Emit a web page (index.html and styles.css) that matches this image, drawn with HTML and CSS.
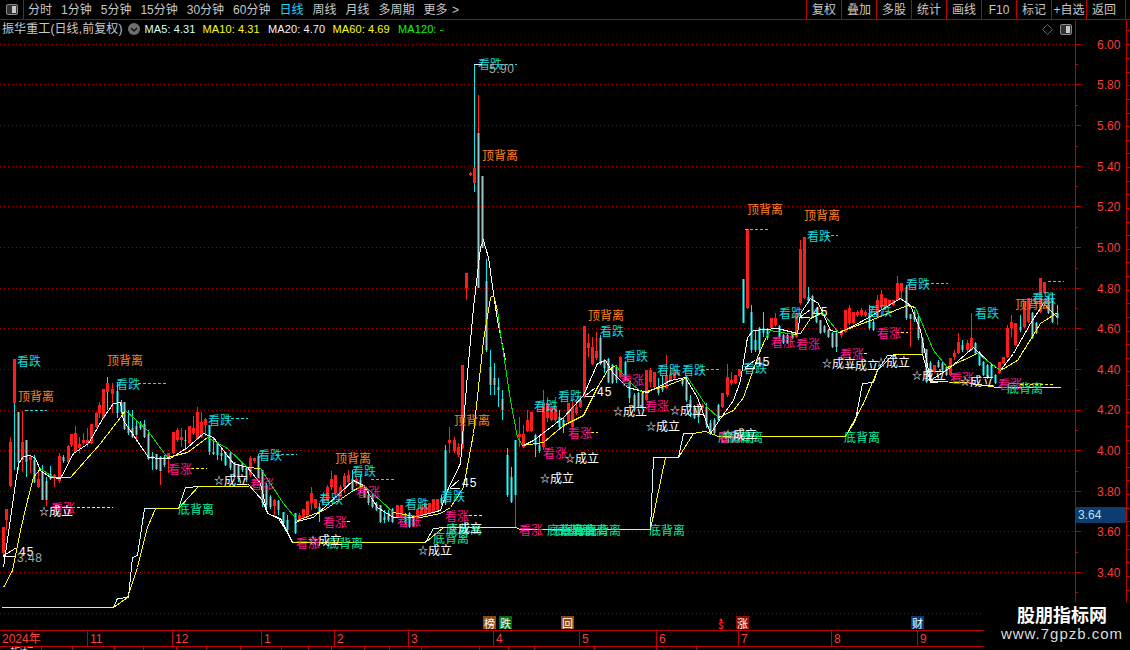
FILE: index.html
```html
<!DOCTYPE html>
<html lang="zh-CN">
<head>
<meta charset="utf-8">
<title>振华重工 日线</title>
<link rel="stylesheet" href="styles.css">
</head>
<body>
<div class="toolbar">
  <div class="toggle-cell"><span class="toggle-icon"><i></i></span></div>
  <nav class="periods">
    <span>分时</span><span>1分钟</span><span>5分钟</span><span>15分钟</span><span>30分钟</span><span>60分钟</span>
    <span class="active">日线</span><span>周线</span><span>月线</span><span>多周期</span><span>更多 <b class="chev">&gt;</b></span>
  </nav>
  <div class="actions">
    <span>复权</span><span>叠加</span><span>多股</span><span>统计</span><span>画线</span><span>F10</span><span>标记</span><span>+自选</span><span>返回</span>
  </div>
</div>

<div class="workspace">
  <div class="plot">
    <div class="legend">
      <span class="stock">振华重工(日线,前复权)</span>
      <span class="caret"><svg width="12" height="12" viewBox="0 0 12 12"><circle cx="6" cy="6" r="6" fill="#6e6e6e"/><path d="M3 5l3 3 3-3" fill="none" stroke="#111" stroke-width="1.4"/></svg></span>
      <span class="ma5">MA5: 4.31</span>
      <span class="ma10">MA10: 4.31</span>
      <span class="ma20">MA20: 4.70</span>
      <span class="ma60">MA60: 4.69</span>
      <span class="ma120">MA120: -</span>
      <span class="legend-tools">
        <svg width="11" height="11" viewBox="0 0 11 11"><path d="M5.5.5l5 5-5 5-5-5z" fill="none" stroke="#666"/></svg>
        <span class="toggle-icon"><i></i></span>
      </span>
    </div>
    <svg class="chart" width="1075" height="592" viewBox="0 38 1075 592">
      <path class="grid" d="M0 44.5H1075M0 84.5H1075M0 125.5H1075M0 166.5H1075M0 206.5H1075M0 247.5H1075M0 288.5H1075M0 328.5H1075M0 369.5H1075M0 410.5H1075M0 450.5H1075M0 491.5H1075M0 531.5H1075M0 572.5H1075M0 613.5H1075"/>
      <defs>
        <path id="down-bodies" d="M18 412V462M26 440V462M34 460V482M42 472V500M46 481V500M50 474V479M63 457V461M117 391V413M121 403V412M124 402V429M128 427V433M132 428V437M136 426V435M140 423V428M144 424V437M148 434V459M152 456V459M156 454V469M160 457V471M164 457V465M185 440V441M209 425V452M213 452V454M217 442V455M221 453V456M225 452V465M230 453V468M234 462V477M238 464V479M242 463V470M246 468V480M258 456V478M262 470V503M266 485V505M270 497V507M278 501V510M283 512V523M287 520V530M295 513V533M319 507V512M352 479V490M360 480V488M364 487V497M368 495V503M372 495V507M376 504V510M380 505V522M384 517V520M388 513V520M392 509V522M405 515V523M409 513V527M413 517V526M441 498V503M445 450V503M478 133V288M482 176V248M486 281V350M490 367V385M494 378V385M498 387V390M502 399V410M507 455V495M511 477V502M515 440V495M535 435V445M539 445V451M559 417V427M563 420V427M600 338V364M604 360V368M608 359V382M612 365V383M616 367V380M625 362V380M629 382V398M634 395V410M638 393V407M642 393V408M658 387V393M662 385V390M682 379V384M686 377V400M690 400V408M694 407V418M698 407V417M706 407V425M710 423V433M714 420V433M718 405V420M743 279V323M751 312V350M755 340V350M759 328V350M763 328V333M767 330V338M779 326V337M783 335V343M787 335V343M792 333V338M808 297V301M812 296V317M816 317V322M820 320V333M824 326V332M828 330V337M832 333V347M836 333V347M869 313V328M873 322V330M906 287V318M910 314V319M914 312V320M918 317V338M922 338V353M926 349V382M930 363V380M938 362V367M942 363V370M946 367V375M962 345V350M975 343V353M979 352V365M983 362V375M987 365V378M991 365V378M995 375V383M1020 327V330M1032 313V338M1036 323V333M1048 297V313M1052 298V322M1057 313V318"/>
      </defs>
      <g class="candles">
        <path class="wick-up" d="M3 527V556M6 509V530M10 437V487M14 359V403M22 411V472M30 455V473M38 472V488M54 474V487M59 453V483M68 445V464M71 434V447M75 426V453M79 437V453M83 433V445M87 428V447M91 424V444M96 412V428M99 402V418M103 389V419M112 383V413M168 453V473M173 432V454M177 428V442M181 428V447M189 426V444M193 416V435M197 407V440M201 412V438M205 418V436M250 456V477M254 458V463M274 499V517M299 513V522M303 509V518M307 501V516M311 487V510M315 499V509M323 492V505M327 485V501M331 471V490M335 475V494M340 485V497M344 473V493M348 470V484M356 476V486M397 505V518M401 505V518M417 509V519M421 505V516M425 503V516M429 503V514M433 499V513M437 499V511M449 427V453M454 437V453M458 443V457M462 365V449M466 273V300M470 172V176M519 417V447M523 425V448M527 410V432M531 412V432M543 390V450M547 397V422M551 407V421M555 397V422M568 403V423M572 400V428M576 400V415M580 395V408M584 326V398M588 333V357M592 337V365M596 332V360M620 356V378M646 370V401M650 368V387M654 372V388M666 355V389M670 367V382M674 369V379M678 372V376M702 403V410M722 393V408M727 364V397M731 372V385M735 375V384M739 369V377M747 229V309M771 318V329M775 313V327M796 313V338M800 240V305M804 237V299M841 330V338M845 310V333M849 305V325M853 312V324M857 310V317M861 308V317M865 310V317M877 295V318M881 290V308M885 298V309M889 300V306M893 300V306M897 276V301M901 283V300M934 365V373M950 358V376M954 350V360M958 333V354M967 340V352M971 313V351M999 362V374M1003 357V364M1007 325V358M1011 315V337M1015 323V346M1024 302V328M1028 298V323M1040 278V313M1044 282V294M478 95V133M515 495V528M160 471V485M910 319V347M46 500V506M136 435V442M1057 318V325"/>
        <path class="wick-down" d="M14 403V470M18 412V470M26 440V477M34 455V483M42 465V500M46 477V500M50 466V480M63 455V463M107 377V410M117 382V418M121 400V414M124 402V430M128 410V435M132 410V438M136 420V435M140 421V430M144 420V438M148 430V460M152 452V470M156 454V470M160 456V471M164 455V467M185 430V450M209 425V455M213 437V455M217 442V460M221 447V461M225 452V466M230 452V470M234 462V478M238 464V482M242 463V472M246 467V482M258 454V478M262 470V507M266 483V510M270 495V509M278 500V515M283 512V527M287 515V533M295 513V534M319 503V522M352 470V492M360 475V493M364 485V498M368 490V505M372 493V508M376 502V511M380 505V523M384 510V523M388 510V522M392 508V523M405 513V524M409 512V528M413 515V527M441 495V505M445 445V505M474 65V192M486 259V352M490 350V395M494 363V395M498 378V407M502 390V420M507 448V497M511 467V503M535 434V457M539 437V453M559 410V428M563 417V433M600 335V365M604 359V373M608 358V383M612 364V384M616 365V383M625 361V381M629 380V403M634 393V412M638 392V408M642 393V409M658 378V395M662 375V392M682 378V386M686 375V402M690 395V417M694 405V419M698 407V423M706 403V428M710 420V435M714 418V434M718 404V421M751 305V353M755 330V352M759 327V353M763 312V337M767 328V340M779 325V338M783 334V344M787 334V344M792 332V339M808 287V303M812 295V318M816 310V323M820 320V334M824 325V333M828 329V338M832 332V348M836 332V352M869 305V330M873 320V331M906 285V320M914 310V322M918 316V340M922 337V354M926 349V383M930 361V382M938 360V368M942 362V371M946 366V376M962 340V352M975 342V354M979 351V366M983 361V376M987 364V379M991 364V379M995 374V384M1020 315V332M1032 312V339M1036 322V334M1048 296V314M1052 293V323M1057 305V318"/>
        <path class="body-up" d="M3 527V553M6 509V520M10 442V486M14 359V403M22 442V460M30 457V460M38 479V487M54 475V478M59 456V481M68 446V462M71 434V445M75 433V452M79 444V448M83 440V443M87 440V444M91 424V443M96 413V427M99 405V413M103 389V418M107 383V392M112 389V394M168 453V459M173 432V453M177 430V440M181 437V440M189 426V443M193 428V433M197 412V439M201 422V437M205 419V425M250 458V475M254 458V461M274 500V506M299 515V520M303 509V517M307 501V515M311 493V503M315 499V508M323 499V503M327 487V500M331 479V487M335 475V493M340 487V495M344 476V487M348 475V482M356 479V484M397 505V517M401 505V517M417 509V518M421 505V515M425 503V515M429 503V513M433 499V512M437 499V510M449 440V443M454 440V451M458 447V455M462 365V448M466 273V288M470 173V175M474 168V183M519 434V437M523 434V447M527 420V431M531 412V431M543 403V447M547 403V418M551 407V420M555 407V420M568 403V422M572 407V427M576 407V413M580 400V407M584 326V397M588 343V348M592 347V364M596 351V358M620 357V377M646 370V400M650 370V382M654 372V387M666 375V388M670 375V380M674 369V378M678 372V375M702 405V408M722 393V407M727 377V395M731 380V383M735 375V383M739 369V376M747 229V308M771 318V328M775 318V325M796 313V337M800 249V303M804 237V298M841 332V335M845 310V332M849 308V323M853 312V323M857 312V315M861 310V315M865 312V315M877 300V317M881 294V307M885 298V308M889 300V305M893 300V305M897 283V300M901 283V291M934 365V372M950 358V375M954 353V357M958 342V353M967 343V350M971 338V350M999 362V373M1003 357V363M1007 328V357M1011 322V328M1015 323V345M1024 302V327M1028 298V322M1040 278V312M1044 282V293"/>
        <use href="#down-bodies" class="body-down"/>
        <use href="#down-bodies" class="body-core"/>
      </g>
      <g class="curves">
        <polyline class="line-white" points="3,567 13,497 18,463 23,456 30,455 35,458 40,470 50,477 60,478 73,453 88,443 103,417 113,403 120,402 123,420 148,457 160,458 170,458 187,447 203,433 213,437 233,463 247,467 260,483 267,513 278,518 290,537 292,542"/>
        <polyline class="line-white" points="295,522 300,520 313,517 353,480 363,485 377,507 393,517 413,517 440,510 447,490 460,463 467,373 473,307 477,273 480,247 483,240 488,257 493,293 497,320 505,360"/>
        <polyline class="line-white" points="523,445 533,440 563,417 583,395 597,363 605,360 613,373 627,387 647,392 670,380 685,377 697,397 710,433 720,418 733,400 740,380 747,337 753,330 777,328 797,333 800,313 810,298 818,303 830,330 840,332 863,320 900,298 910,305 920,330 930,380 950,367 973,347 990,363 1000,370 1013,353 1030,323 1043,303 1057,317"/>
        <polyline class="line-yellow" points="3,587 12,570 20,530 27,500 33,477 40,468"/>
        <polyline class="line-green" points="40,468 53,477"/>
        <polyline class="line-yellow" points="53,477 70,477 100,443 120,417 125,410"/>
        <polyline class="line-green" points="125,410 147,430 167,457"/>
        <polyline class="line-yellow" points="167,457 187,452 207,437"/>
        <polyline class="line-green" points="207,437 227,448 247,467"/>
        <polyline class="line-yellow" points="247,467 260,468"/>
        <polyline class="line-green" points="260,468 283,503 297,520"/>
        <polyline class="line-yellow" points="297,520 323,510 353,490 363,485"/>
        <polyline class="line-green" points="363,485 380,500 393,512"/>
        <polyline class="line-yellow" points="393,512 420,517 440,513 450,507 463,487 473,433 483,340 488,310 490,297 493,295 497,310"/>
        <polyline class="line-green" points="497,310 500,333 510,400 517,437 522,445"/>
        <polyline class="line-yellow" points="522,445 543,442 563,425 583,415 597,387 607,370 615,365"/>
        <polyline class="line-green" points="615,365 633,385 642,392"/>
        <polyline class="line-yellow" points="642,392 667,385 687,377"/>
        <polyline class="line-green" points="687,377 707,407 718,417"/>
        <polyline class="line-yellow" points="718,417 733,410 743,397 757,357 765,338"/>
        <polyline class="line-green" points="765,338 770,330 793,334"/>
        <polyline class="line-yellow" points="793,334 800,333 810,318 822,312"/>
        <polyline class="line-green" points="822,312 838,332"/>
        <polyline class="line-yellow" points="838,332 870,320 907,305 915,307"/>
        <polyline class="line-green" points="915,307 933,350 947,367"/>
        <polyline class="line-yellow" points="947,367 977,353"/>
        <polyline class="line-green" points="977,353 1000,370"/>
        <polyline class="line-yellow" points="1000,370 1017,360 1040,323 1057,312"/>
        <polyline class="line-pale" points="113,607 117,598 128,597 132,557 137,555 144,508 178,508 185,487 200,486"/>
        <polyline class="line-pale" points="425,542 433,528 445,527"/>
        <polyline class="line-pale" points="650,529 653,457 678,457 683,433 693,433"/>
        <polyline class="line-pale" points="845,436 855,420 862,383 873,382 877,370 887,355 905,354"/>
        <polyline class="line-white" points="248,484 262,500 267,513 280,518 292,542 296,542"/>
        <polyline class="line-white" points="922,354 930,382 945,381"/>
        <polyline class="line-yellow" points="1,607 113,607 127,597 137,567 147,527 155,508 178,508 198,486 248,486"/>
        <polyline class="line-yellow" points="292,542 425,542 443,527 515,527 520,529 650,529 665,457 678,457 693,433 705,431 718,436 845,436 863,403 877,370 893,354 922,354"/>
        <polyline class="line-yellow" points="930,381 965,382 997,387 1060,387"/>
      </g>
      <g class="dashes-cyan">
        <path d="M25 410.500H47M138 383.500H166M226 418.500H248M276 454.500H297M371 479.500H394M500 64.500H517M701 369.500H720M745 229.500H770M826 235.500H838M926 283.500H948M1048 281.500H1064"/>
      </g>
      <g class="dashes-yellow">
        <path d="M72 507.500H113M186 468.500H207M342 521.500H350M464 515.500H484M586 432.500H598M859 353.500H868M896 332.500H908M1020 384.500H1053"/>
      </g>
      <g class="labels top-div">
        <text x="18" y="395">顶背离</text><text x="107" y="359">顶背离</text><text x="335" y="457">顶背离</text><text x="454" y="419">顶背离</text><text x="482" y="154">顶背离</text><text x="588" y="314">顶背离</text><text x="747" y="208">顶背离</text><text x="804" y="214">顶背离</text><text x="1015" y="303">顶背离</text>
      </g>
      <g class="labels bottom-div">
        <text x="178" y="508">底背离</text><text x="327" y="542">底背离</text><text x="433" y="537">底背离</text><text x="446" y="528">底背离</text><text x="547" y="529">底背离</text><text x="555" y="529">底背离</text><text x="561" y="529">底背离</text><text x="572" y="529">底背离</text><text x="585" y="529">底背离</text><text x="649" y="529">底背离</text><text x="718" y="436">底背离</text><text x="727" y="436">底背离</text><text x="844" y="436">底背离</text><text x="1007" y="387">底背离</text>
      </g>
      <g class="labels fall">
        <text x="17" y="360">看跌</text><text x="116" y="383">看跌</text><text x="208" y="419">看跌</text><text x="258" y="454">看跌</text><text x="319" y="498">看跌</text><text x="352" y="470">看跌</text><text x="405" y="503">看跌</text><text x="441" y="495">看跌</text><text x="478" y="63">看跌</text><text x="534" y="405">看跌</text><text x="558" y="395">看跌</text><text x="600" y="330">看跌</text><text x="624" y="355">看跌</text><text x="657" y="369">看跌</text><text x="682" y="369">看跌</text><text x="743" y="367">看跌</text><text x="779" y="312">看跌</text><text x="807" y="235">看跌</text><text x="868" y="310">看跌</text><text x="906" y="283">看跌</text><text x="975" y="312">看跌</text><text x="1032" y="297">看跌</text>
      </g>
      <g class="labels rise">
        <text x="51" y="507">看涨</text><text x="168" y="468">看涨</text><text x="250" y="483">看涨</text><text x="296" y="542">看涨</text><text x="323" y="521">看涨</text><text x="356" y="491">看涨</text><text x="397" y="520">看涨</text><text x="445" y="515">看涨</text><text x="519" y="529">看涨</text><text x="543" y="452">看涨</text><text x="568" y="432">看涨</text><text x="620" y="379">看涨</text><text x="645" y="405">看涨</text><text x="718" y="436">看涨</text><text x="771" y="341">看涨</text><text x="796" y="343">看涨</text><text x="840" y="353">看涨</text><text x="877" y="332">看涨</text><text x="950" y="377">看涨</text><text x="998" y="383">看涨</text>
      </g>
      <g class="labels ok">
        <text x="39" y="510"><tspan class="star">☆</tspan>成立</text><text x="214" y="479"><tspan class="star">☆</tspan>成立</text><text x="308" y="539"><tspan class="star">☆</tspan>成立</text><text x="418" y="549"><tspan class="star">☆</tspan>成立</text><text x="448" y="527"><tspan class="star">☆</tspan>成立</text><text x="540" y="477"><tspan class="star">☆</tspan>成立</text><text x="565" y="457"><tspan class="star">☆</tspan>成立</text><text x="613" y="410"><tspan class="star">☆</tspan>成立</text><text x="646" y="425"><tspan class="star">☆</tspan>成立</text><text x="670" y="409"><tspan class="star">☆</tspan>成立</text><text x="723" y="433"><tspan class="star">☆</tspan>成立</text><text x="822" y="362"><tspan class="star">☆</tspan>成立</text><text x="845" y="364"><tspan class="star">☆</tspan>成立</text><text x="876" y="361"><tspan class="star">☆</tspan>成立</text><text x="912" y="374"><tspan class="star">☆</tspan>成立</text><text x="960" y="380"><tspan class="star">☆</tspan>成立</text>
      </g>
      <g class="marks">
        <path d="M3 556L16 548M3 556H16M450 488L459 480M450 488H460M585 396L595 388M585 396H595M745 368L755 360M745 368H755M800 317L810 310M800 317H810M474 64H482"/>
        <text x="19" y="552">45</text><text x="462" y="483">45</text><text x="597" y="392">45</text><text x="755" y="362">45</text><text x="813" y="312">45</text>
      </g>
      <g class="extreme">
        <text x="17" y="558">3.48</text><text x="489" y="69">5.90</text>
      </g>
      <g class="badges">
        <rect class="b-brown" x="483" y="616" width="13" height="13"/><text x="489.500" y="622.500">榜</text>
        <rect class="b-green" x="499" y="616" width="13" height="13"/><text x="505.500" y="622.500">跌</text>
        <rect class="b-brown" x="561" y="616" width="13" height="13"/><text x="567.500" y="622.500">回</text>
        <rect class="b-red" x="736" y="616" width="13" height="13"/><text x="742.500" y="622.500">涨</text>
        <rect class="b-blue" x="911" y="616" width="13" height="13"/><text x="917.500" y="622.500">财</text>
        <text class="b-dollar" x="721" y="624">$</text>
        <path class="b-arrow" d="M721 618l2 3h-4z"/>
      </g>
    </svg>
  </div>
  <svg class="price-axis" width="55" height="610" viewBox="1075 20 55 610">
    <path class="axis-major" d="M1075.500 20V602M1075 44.500H1081M1075 84.500H1081M1075 125.500H1081M1075 166.500H1081M1075 206.500H1081M1075 247.500H1081M1075 288.500H1081M1075 328.500H1081M1075 369.500H1081M1075 410.500H1081M1075 450.500H1081M1075 491.500H1081M1075 531.500H1081M1075 572.500H1081"/>
    <path class="axis-major" d="M1075 64.500H1078M1075 105.500H1078M1075 146.500H1078M1075 186.500H1078M1075 227.500H1078M1075 268.500H1078M1075 308.500H1078M1075 349.500H1078M1075 389.500H1078M1075 430.500H1078M1075 471.500H1078M1075 511.500H1078M1075 552.500H1078M1075 592.500H1078"/>
    <path class="axis-major" d="M1126.500 20V602M1126 30.500H1130M1126 44.500H1130M1126 58.500H1130M1126 72.500H1130M1126 85.500H1130M1126 99.500H1130M1126 113.500H1130M1126 126.500H1130M1126 140.500H1130M1126 153.500H1130M1126 167.500H1130M1126 181.500H1130M1126 194.500H1130M1126 208.500H1130M1126 222.500H1130M1126 235.500H1130M1126 249.500H1130M1126 262.500H1130M1126 276.500H1130M1126 290.500H1130M1126 303.500H1130M1126 317.500H1130M1126 331.500H1130M1126 344.500H1130M1126 358.500H1130M1126 371.500H1130M1126 385.500H1130M1126 399.500H1130M1126 412.500H1130M1126 426.500H1130M1126 440.500H1130M1126 453.500H1130M1126 467.500H1130M1126 480.500H1130M1126 494.500H1130M1126 508.500H1130M1126 521.500H1130M1126 535.500H1130M1126 549.500H1130M1126 562.500H1130M1126 576.500H1130M1126 590.500H1130"/>
    <g class="axis-labels">
      <text x="1097" y="44.500">6.00</text><text x="1097" y="85">5.80</text><text x="1097" y="126">5.60</text><text x="1097" y="167">5.40</text><text x="1097" y="207">5.20</text><text x="1097" y="248">5.00</text><text x="1097" y="289">4.80</text><text x="1097" y="329">4.60</text><text x="1097" y="369.500">4.40</text><text x="1097" y="410">4.20</text><text x="1097" y="451">4.00</text><text x="1097" y="492">3.80</text><text x="1097" y="532">3.60</text><text x="1097" y="573">3.40</text>
    </g>
    <rect class="price-tag" x="1076" y="507" width="50" height="16"/>
    <text class="price-tag-text" x="1078" y="515">3.64</text>
  </svg>
</div>

<div class="time-axis">
  <span>2024年</span><span>11</span><span>12</span><span>1</span><span>2</span><span>3</span><span>4</span><span>5</span><span>6</span><span>7</span><span>8</span><span>9</span>
</div>
<div class="tabs">
  <span>指标</span><span></span><span></span><span></span><span></span><span></span><span></span><span></span><span></span><span></span><span></span><span></span><span></span><span></span><span></span><span></span><span></span><span></span><span></span>
</div>

<aside class="watermark">
  <strong>股朋指标网</strong>
  <em>www.7gpzb.com</em>
</aside>
</body>
</html>
```

FILE: styles.css
```css
* { box-sizing: border-box; }
html, body { margin: 0; padding: 0; }
body {
  position: relative;
  width: 1130px;
  height: 650px;
  overflow: hidden;
  background: #000;
  color: #c8c8c8;
  font: 12px/1 "Liberation Sans", "Noto Sans CJK SC", sans-serif;
}

/* top toolbar */
.toolbar {
  display: flex;
  height: 20px;
  border-bottom: 1px solid #b00000;
}
.toggle-cell {
  display: flex;
  align-items: center;
  justify-content: center;
  width: 24px;
  height: 19px;
  border-right: 1px solid #c00000;
}
.toggle-icon {
  display: inline-block;
  width: 12px;
  height: 11px;
  padding: 1px;
  border: 1px solid #8a8a8a;
  border-radius: 2px;
  background: #333;
}
.toggle-icon i {
  display: block;
  width: 4px;
  height: 7px;
  margin-left: 4px;
  background: #c8c8c8;
}
.periods {
  display: flex;
  align-items: center;
  gap: 9px;
  height: 19px;
  padding-left: 4px;
  flex: 1;
}
.periods .active { color: #19d8ff; }
.chev { font-weight: 400; margin-left: 1px; }
.actions {
  display: grid;
  grid-template-columns: repeat(9, 35px);
  height: 19px;
  width: 320px;
  border-right: 1px solid #c00000;
  margin-right: 4px;
}
.actions span {
  display: flex;
  align-items: center;
  justify-content: center;
  white-space: nowrap;
  border-left: 1px solid #c00000;
}

/* chart area */
.workspace {
  display: flex;
  height: 610px;
}
.plot {
  display: flex;
  flex-direction: column;
  width: 1075px;
}
.legend {
  display: flex;
  align-items: center;
  height: 18px;
  padding: 0 2px;
  white-space: nowrap;
}
.stock { width: 126px; letter-spacing: .1px; }
.caret { display: flex; width: 16.500px; }
.ma5, .ma10, .ma20, .ma60, .ma120 { font-size: 11px; letter-spacing: .1px; }
.ma5 { width: 58px; color: #d8ffff; }
.ma10 { width: 65.500px; color: #ffff00; }
.ma20 { width: 64.500px; color: #f4f4f4; }
.ma60 { width: 65.500px; color: #ffff00; }
.ma120 { color: #00ff00; }
.legend-tools {
  display: flex;
  align-items: center;
  gap: 7px;
  margin-left: auto;
  padding-right: 1px;
}
.chart { display: block; }

.grid { fill: none; stroke: #a00000; stroke-width: 1; stroke-dasharray: 1 3; }

.candles { transform: translateX(.5px); fill: none; }
.wick-up { stroke: #ff2020; stroke-width: 1; }
.wick-down { stroke: #00f0f0; stroke-width: 1; }
.body-up { stroke: #ff1c1c; stroke-width: 3; }
.body-down { stroke: #127c7c; stroke-width: 3; }
.body-core { stroke: #98c8c8; stroke-width: 1; }

.curves { transform: translate(.5px, .5px); }
.curves polyline { fill: none; stroke-width: 1; shape-rendering: crispEdges; }
.line-white { stroke: #fff; }
.line-yellow { stroke: #ffff00; }
.line-green { stroke: #00e000; }
.line-pale { stroke: #ccffff; }

.dashes-cyan path, .dashes-yellow path { fill: none; stroke-width: 1; stroke-dasharray: 3 2; }
.dashes-cyan path { stroke: #00e8f0; }
.dashes-yellow path { stroke: #ffff00; }

.labels text {
  font: 12px "Noto Sans CJK SC", sans-serif;
  dominant-baseline: central;
}
.top-div text { fill: #ff8020; }
.bottom-div text { fill: #00f0a0; }
.fall text { fill: #12d8dc; }
.rise text { fill: #ff1490; }
.ok text { fill: #fff; }
.star { font-size: 10px; font-weight: 700; fill: #ddd; }

.marks path { fill: none; stroke: #fff; stroke-width: 1; shape-rendering: crispEdges; }
.marks text { fill: #fff; font-size: 12px; letter-spacing: 1px; dominant-baseline: central; }
.extreme text { fill: #a8a8a8; font-size: 12px; letter-spacing: .5px; dominant-baseline: central; }

.badges text {
  fill: #fff;
  font: 11px "Noto Sans CJK SC", sans-serif;
  text-anchor: middle;
  dominant-baseline: central;
}
.b-brown { fill: #8c4a12; }
.b-green { fill: #006e10; }
.b-red { fill: #8a0a0a; }
.b-blue { fill: #0a3a70; }
.badges .b-dollar { fill: #ff1c1c; font-size: 10px; font-weight: 700; }
.b-arrow { fill: #ff1c1c; }

/* right price axis */
.price-axis { display: block; }
.axis-major { fill: none; stroke: #c00000; stroke-width: 1; }
.axis-labels text { fill: #ff3a3a; font-size: 12px; dominant-baseline: central; }
.price-tag { fill: #0c3c70; }
.price-tag-text { fill: #b8e0e8; font-size: 12px; dominant-baseline: central; }

/* bottom time axis */
.time-axis {
  display: grid;
  grid-template-columns: 87px 85px 89px 73px 74px 85px 86px 77px 82px 93px 86px 67px;
  width: 984px;
  height: 17px;
  border-top: 1px solid #c00000;
  border-bottom: 1px solid #c00000;
  color: #ff3a3a;
}
.time-axis span {
  display: flex;
  align-items: center;
  padding-left: 2px;
  border-left: 1px solid #c00000;
}
.time-axis span:first-child { border-left: 0; }

.tabs {
  display: grid;
  grid-template-columns: 42px 31px 42px 29px 33px 30px 34px 41px 27px 23px 33px 25px 32px 58px 29px 26px 60px 62px 40px;
  width: 984px;
  height: 3px;
  overflow: hidden;
}
.tabs span {
  padding-left: 10px;
  border-right: 1px solid #c00000;
  color: #c8c8c8;
  line-height: 12px;
}

/* site watermark pinned over the corner */
.watermark {
  position: absolute;
  right: 0;
  bottom: 0;
  display: flex;
  flex-direction: column;
  align-items: center;
  width: 146px;
  height: 48px;
  padding: 1px 0 0 10px;
  background: #000;
}
.watermark strong {
  color: #fff;
  font: 700 18px/22px "Noto Sans CJK SC", sans-serif;
}
.watermark em {
  color: #dcdcdc;
  font: 400 15px/18px "Liberation Sans", sans-serif;
  letter-spacing: 1px;
}
```
